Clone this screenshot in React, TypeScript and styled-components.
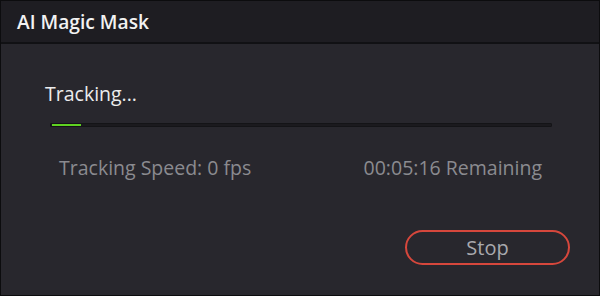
import React, { ReactElement } from 'react'
import styled, { createGlobalStyle } from 'styled-components'

const GlobalStyle = createGlobalStyle`
  html, body {
    margin: 0;
    padding: 0;
    background: #000;
  }
  body {
    font-family: "Open Sans", "Noto Sans", sans-serif;
  }
`

export default function App(): ReactElement {
  const progress = 5.8

  return (
    <>
      <GlobalStyle />
      <Dialog>
        <TitleBar>
          <Title>AI Magic Mask</Title>
        </TitleBar>
        <Body>
          <Status>Tracking...</Status>
          <Track>
            <Fill style={{ width: `${progress}%` }} />
          </Track>
          <InfoRow>
            <Info>Tracking Speed: 0 fps</Info>
            <Info>00:05:16 Remaining</Info>
          </InfoRow>
          <Footer>
            <StopButton>Stop</StopButton>
          </Footer>
        </Body>
      </Dialog>
    </>
  )
}

const Dialog = styled.div`
  width: 600px;
  height: 296px;
  box-sizing: border-box;
  border: 1px solid #0c0c0e;
  background: #28272d;
  display: flex;
  flex-direction: column;
`

const TitleBar = styled.div`
  height: 41px;
  flex-shrink: 0;
  background: #1e1d22;
  border-bottom: 2px solid #111114;
  display: flex;
  align-items: center;
  padding: 0 16px;
`

const Title = styled.h1`
  margin: 0;
  font-size: 19.2px;
  font-weight: 600;
  color: #f2f2f2;
`

const Body = styled.div`
  flex: 1;
  display: flex;
  flex-direction: column;
  padding: 37px 29px 0 44px;
`

const Status = styled.div`
  font-size: 19.5px;
  color: #ececec;
  line-height: 26px;
`

const Track = styled.div`
  margin: 16px 0 0 5px;
  height: 4px;
  width: 502px;
  box-sizing: border-box;
  background: #1b1a1e;
  border: 1px solid #141417;
  border-radius: 1px;
`

const Fill = styled.div`
  height: 2px;
  margin-left: 1px;
  background: #5fd221;
`

const InfoRow = styled.div`
  display: flex;
  justify-content: space-between;
  margin: 28px 28px 0 14px;
`

const Info = styled.span`
  font-size: 19.5px;
  color: #8b8b90;
  line-height: 26px;
`

const Footer = styled.div`
  display: flex;
  justify-content: flex-end;
  margin-top: 49px;
`

const StopButton = styled.button`
  width: 165px;
  height: 35px;
  border-radius: 18px;
  border: 2px solid #d6473c;
  background: transparent;
  color: #a9a9ad;
  font-family: "Open Sans", "Noto Sans", sans-serif;
  font-size: 20px;
  padding: 0;
  cursor: pointer;
`
